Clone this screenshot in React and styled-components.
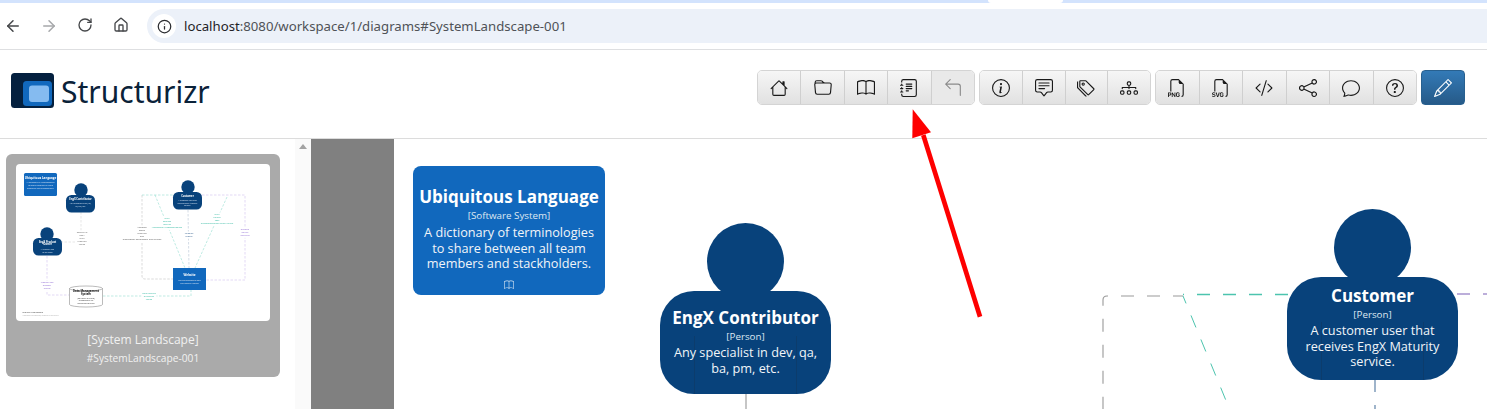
import styled, { createGlobalStyle } from "styled-components";
import { ArrowLeft, ArrowRight, RotateCw, House, Info } from "lucide-react";
import {
  BsHouse,
  BsFolder,
  BsBook,
  BsJournalText,
  BsArrow90DegLeft,
  BsInfoCircle,
  BsChatSquareText,
  BsTags,
  BsDiagram3,
  BsFiletypePng,
  BsFiletypeSvg,
  BsCodeSlash,
  BsShare,
  BsChat,
  BsQuestionCircle,
  BsPencil,
} from "react-icons/bs";

const GlobalStyle = createGlobalStyle`
  html, body {
    margin: 0;
    padding: 0;
    background: #fff;
    overflow: hidden;
  }
  body {
    font-family: "Open Sans", "Liberation Sans", sans-serif;
  }
`;

const Page = styled.div`
  width: 1487px;
  height: 409px;
  display: flex;
  flex-direction: column;
  position: relative;
  overflow: hidden;
`;

const TabStrip = styled.div`
  height: 3px;
  flex: none;
  display: flex;
  background: #d3e3fd;
`;

const TabGap = styled.div`
  width: 75px;
  margin-left: 988px;
  border-radius: 0 0 3px 3px;
  background: #fff;
`;

const BrowserBar = styled.div`
  height: 47px;
  flex: none;
  box-sizing: border-box;
  display: flex;
  align-items: center;
  border-bottom: 1px solid #dedfe1;
  background: #fff;
`;

const NavGroup = styled.div`
  display: flex;
  margin-left: -5px;
`;

const NavButton = styled.div`
  width: 36px;
  display: flex;
  justify-content: center;
  color: ${(p) => (p.$off ? "#a6a8ab" : "#45474a")};
`;

const AddressPill = styled.div`
  flex: 1;
  height: 34px;
  margin-left: 8px;
  display: flex;
  align-items: center;
  gap: 8px;
  padding-left: 5px;
  border-radius: 17px 0 0 17px;
  background: #ecf1f9;
  font-family: "Noto Sans", sans-serif;
  font-size: 13.2px;
  color: #1f2226;
`;

const InfoDot = styled.div`
  width: 24px;
  height: 24px;
  border-radius: 50%;
  background: #fff;
  display: flex;
  align-items: center;
  justify-content: center;
  color: #2c2d30;
`;

const UrlRest = styled.span`
  color: #4f5257;
`;

const Header = styled.header`
  height: 89px;
  flex: none;
  box-sizing: border-box;
  display: flex;
  align-items: flex-start;
  justify-content: space-between;
  padding: 20px 22px 0 11px;
  border-bottom: 1px solid #dcdcdc;
`;

const Brand = styled.div`
  display: flex;
  align-items: center;
  gap: 7px;
  height: 35px;
  margin-top: 3px;
  font-family: "Noto Sans", sans-serif;
  font-size: 30px;
  color: #0a2239;
`;

const BrandName = styled.span`
  padding-top: 2px;
`;

const Toolbar = styled.div`
  display: flex;
  gap: 4px;
`;

const ButtonGroup = styled.div`
  width: ${(p) => p.$width}px;
  box-sizing: border-box;
  display: flex;
  border: 1px solid #d4d4d4;
  border-radius: 5px;
  overflow: hidden;
`;

const ToolButton = styled.div`
  flex: 1;
  height: 33px;
  box-sizing: border-box;
  display: flex;
  align-items: center;
  justify-content: center;
  font-size: 18px;
  color: ${(p) => (p.$off ? "#8a8a8a" : "#1a1a1a")};
  background: ${(p) => (p.$off ? "#e9e9e9" : "linear-gradient(#f6f6f6, #e1e1e1)")};
  & + & {
    border-left: 1px solid #cfcfcf;
  }
`;

const EditButton = styled.div`
  width: 44px;
  height: 35px;
  display: flex;
  align-items: center;
  justify-content: center;
  font-size: 18px;
  color: #fff;
  border-radius: 4px;
  border: 1px solid #28608f;
  box-sizing: border-box;
  background: linear-gradient(#337ab7, #265a88);
`;

const Body = styled.div`
  flex: 1;
  display: flex;
  min-height: 0;
`;

const Sidebar = styled.aside`
  width: 311px;
  flex: none;
  display: flex;
  background: #fff;
`;

const ThumbList = styled.div`
  flex: 1;
  padding: 15px 15px 0 6px;
`;

const ThumbCard = styled.div`
  height: 223px;
  box-sizing: border-box;
  padding: 10px;
  border-radius: 6px;
  background: #aaaaaa;
  text-align: center;
  color: #f1f1f1;
`;

const ThumbImage = styled.svg`
  display: block;
  width: 254px;
  height: 157px;
  border-radius: 4px;
  background: #fff;
  filter: blur(0.25px);
`;

const ThumbTitle = styled.div`
  margin-top: 10px;
  font-size: 12px;
  line-height: 18px;
`;

const ThumbKey = styled.div`
  margin-top: 1px;
  font-size: 10.2px;
  line-height: 16px;
`;

const ScrollTrack = styled.div`
  width: 16px;
  background: #fafafa;
  display: flex;
  justify-content: center;
  padding-top: 5px;
  box-sizing: border-box;
`;

const ScrollArrow = styled.div`
  width: 0;
  height: 0;
  border-left: 4px solid transparent;
  border-right: 4px solid transparent;
  border-bottom: 5px solid #a3a3a3;
`;

const Gutter = styled.div`
  width: 83px;
  flex: none;
  background: #808080;
`;

const Canvas = styled.main`
  flex: 1;
  position: relative;
  overflow: hidden;
  background: #fff;
`;

const Lines = styled.svg`
  position: absolute;
  left: 0;
  top: 0;
  width: 1093px;
  height: 270px;
`;

const NodeName = styled.div`
  font-size: 17px;
  line-height: 24px;
  font-weight: 700;
`;

const NodeType = styled.div`
  font-size: 9.8px;
  line-height: 13px;
  color: #dfe8f2;
`;

const NodeText = styled.div`
  position: relative;
  margin-top: 3px;
  font-size: 12.7px;
  line-height: 15.5px;
  color: #f1f5f9;
`;

const NodeIcon = styled.div`
  display: flex;
  justify-content: center;
  margin-top: 8px;
  font-size: 10px;
  color: #d5e3f2;
`;

const SystemBox = styled.div`
  position: absolute;
  left: ${(p) => p.$x}px;
  top: ${(p) => p.$y}px;
  width: 192px;
  height: 129px;
  box-sizing: border-box;
  padding-top: 19px;
  border-radius: 8px;
  background: #1168bd;
  color: #fff;
  text-align: center;
`;

const PersonHead = styled.div`
  position: absolute;
  left: ${(p) => p.$x + 47}px;
  top: ${(p) => p.$y}px;
  width: 77px;
  height: 77px;
  border-radius: 50%;
  background: #08427b;
`;

const PersonBody = styled.div`
  position: absolute;
  left: ${(p) => p.$x}px;
  top: ${(p) => p.$y + 68}px;
  width: 171px;
  height: 103px;
  box-sizing: border-box;
  padding-top: ${(p) => p.$pad}px;
  border-radius: 34px;
  background: #08427b;
  color: #fff;
  text-align: center;
  &::before {
    content: "";
    position: absolute;
    left: 34px;
    right: 34px;
    top: 45px;
    bottom: 0;
    border-left: 1px solid #0c3c6c;
    border-right: 1px solid #0c3c6c;
  }
  ${NodeText} {
    margin-top: 2px;
  }
`;

const ArrowMark = styled.svg`
  position: absolute;
  left: 900px;
  top: 100px;
`;

const toolGroups = [
  {
    width: 218,
    items: [
      { icon: BsHouse },
      { icon: BsFolder },
      { icon: BsBook },
      { icon: BsJournalText },
      { icon: BsArrow90DegLeft, off: true },
    ],
  },
  {
    width: 172,
    items: [{ icon: BsInfoCircle }, { icon: BsChatSquareText }, { icon: BsTags }, { icon: BsDiagram3 }],
  },
  {
    width: 262,
    items: [
      { icon: BsFiletypePng },
      { icon: BsFiletypeSvg },
      { icon: BsCodeSlash },
      { icon: BsShare },
      { icon: BsChat },
      { icon: BsQuestionCircle },
    ],
  },
];

const miniEdges = [
  { d: "M126 31V112Q126 115 129 115H157", c: "#b5b5b5" },
  { d: "M126 31H157", c: "#7fd6c6" },
  { d: "M186 31H229V116H190", c: "#c4b0ea" },
  { d: "M139 31L169 104", c: "#7fd6c6" },
  { d: "M211 33L179 104", c: "#7fd6c6" },
  { d: "M172 46L173 104", c: "#a9b9cc" },
  { d: "M65 48V78H46", c: "#cfcfcf" },
  { d: "M31 92V131H53", c: "#c4b0ea" },
  { d: "M87 132H175V126", c: "#7fd6c6" },
];

const miniLabels = [
  { x: 66, y: 69, w: 12, c: "#666", lines: ["Reports to", "EngX", "Data", "Progress", "Issues"] },
  { x: 126, y: 64, w: 47, c: "#555", lines: ["Manages", "scope", "priorities", "and", "Stakeholder engagement and reviews"] },
  { x: 151, y: 55, w: 30, c: "#30b8a0", lines: ["Data", "services", "metrics", "Assessment recommendation"] },
  { x: 201, y: 51, w: 32, c: "#30b8a0", lines: ["Data", "Update", "Logs", "Recommendation report review"] },
  { x: 173, y: 70, w: 10, c: "#35608f", lines: ["Updates", "project"] },
  { x: 229, y: 66, w: 12, c: "#8a63d2", lines: ["Submits", "and its", "activities"] },
  { x: 31, y: 119, w: 12, c: "#8a63d2", lines: ["Manage and", "Request", "review"] },
  { x: 133, y: 130, w: 15, c: "#30b8a0", lines: ["Data services", "of account", "Issues"] },
];

const miniPeople = [
  { x: 50, y: 31, hx: 65, hy: 26, name: ["EngX Contributor"], text: ["Any specialist in dev, qa,", "ba, pm, etc."] },
  { x: 17, y: 74, hx: 31, hy: 70, name: ["EngX Product", "Owner"], text: ["A Maturity lead", "of the team"] },
  { x: 157, y: 28, hx: 172, hy: 23, name: ["Customer"], text: ["A customer user that", "receives EngX Maturity", "service."] },
];

function MiniText({ x, y, lines, size = 2.3, fill, bold, step = 3.1 })
{
  return lines.map((line, i) => (
    <text key={line + i} x={x} y={y + i * step} fontSize={size} fill={fill} fontWeight={bold ? 700 : 400} textAnchor="middle">
      {line}
    </text>
  ));
}

function MiniDiagram()
{
  return (
    <ThumbImage viewBox="0 0 254 157">
      {miniEdges.map((edge) => (
        <path key={edge.d} d={edge.d} fill="none" stroke={edge.c} strokeWidth="0.5" strokeDasharray="2.5 1.5" />
      ))}

      {miniLabels.map((label) => (
        <g key={label.x + "-" + label.y}>
          <rect x={label.x - label.w / 2} y={label.y - 2.5} width={label.w} height={label.lines.length * 3.1 + 1} fill="#fff" />
          <MiniText x={label.x} y={label.y} lines={label.lines} fill={label.c} size={2.2} />
        </g>
      ))}

      <rect x="8" y="9" width="33" height="23" rx="1.5" fill="#1168bd" />
      <MiniText x={24.5} y={14.5} lines={["Ubiquitous Language"]} fill="#fff" size={3} bold />
      <MiniText x={24.5} y={19} lines={["A dictionary of terminologies", "to share between all team", "members and stackholders."]} fill="#dbe8f6" size={2.1} step={2.9} />

      {miniPeople.map((person) => (
        <g key={person.name[0]}>
          <circle cx={person.hx} cy={person.hy} r="6.7" fill="#08427b" />
          <rect x={person.x} y={person.y} width="29" height="17.5" rx="5.5" fill="#08427b" />
          <MiniText x={person.x + 14.5} y={person.y + 4.5} lines={person.name} fill="#fff" size={2.6} bold step={2.9} />
          <MiniText x={person.x + 14.5} y={person.y + 6.5 + person.name.length * 2.9} lines={person.text} fill="#d5e3f2" size={1.9} step={2.4} />
        </g>
      ))}

      <rect x="157" y="104" width="33" height="22" fill="#1168bd" />
      <MiniText x={173.5} y={112} lines={["Website"]} fill="#fff" size={3} bold />
      <MiniText x={173.5} y={117} lines={["Includes assessment flow", "and maturity reports"]} fill="#d5e3f2" size={1.9} step={2.6} />

      <path d="M53.5 124.5V140.5A16.5 2.5 0 0 0 86.5 140.5V124.5A16.5 2.5 0 0 0 53.5 124.5A16.5 2.5 0 0 0 86.5 124.5" fill="#fff" stroke="#777" strokeWidth="0.5" />
      <MiniText x={70} y={128} lines={["Data Management", "System"]} fill="#111" size={2.8} bold />
      <MiniText x={70} y={134.5} lines={["[Software System]", "responsible for", "collecting metrics"]} fill="#333" size={2.1} step={2.7} />

      <text x="6.5" y="149" fontSize="2.4" fill="#444">System Landscape</text>
      <text x="6.5" y="152" fontSize="1.6" fill="#aaa">Workspace last modified, rendered by Structurizr</text>
    </ThumbImage>
  );
}

function Logo()
{
  return (
    <svg width="43" height="35" viewBox="0 0 43 35">
      <rect width="43" height="35" rx="3.5" fill="#04203f" />
      <rect x="12" y="8" width="29" height="25" rx="3.5" fill="#1168bd" />
      <rect x="18" y="12.5" width="20" height="16.5" rx="3" fill="#85bbf0" />
    </svg>
  );
}

export default function App()
{
  return (
    <Page>
      <GlobalStyle />
      <TabStrip><TabGap /></TabStrip>
      <BrowserBar>
        <NavGroup>
          <NavButton><ArrowLeft size={18} strokeWidth={2} /></NavButton>
          <NavButton $off><ArrowRight size={18} strokeWidth={2} /></NavButton>
          <NavButton><RotateCw size={16} strokeWidth={2} /></NavButton>
          <NavButton><House size={16} strokeWidth={2} /></NavButton>
        </NavGroup>
        <AddressPill>
          <InfoDot><Info size={15} strokeWidth={2} /></InfoDot>
          <span>localhost<UrlRest>:8080/workspace/1/diagrams#SystemLandscape-001</UrlRest></span>
        </AddressPill>
      </BrowserBar>

      <Header>
        <Brand><Logo /><BrandName>Structurizr</BrandName></Brand>
        <Toolbar>
          {toolGroups.map((group) => (
            <ButtonGroup key={group.width} $width={group.width}>
              {group.items.map(({ icon: Icon, off }, j) => (
                <ToolButton key={j} $off={off}><Icon /></ToolButton>
              ))}
            </ButtonGroup>
          ))}
          <EditButton><BsPencil /></EditButton>
        </Toolbar>
      </Header>

      <Body>
        <Sidebar>
          <ThumbList>
            <ThumbCard>
              <MiniDiagram />
              <ThumbTitle>[System Landscape]</ThumbTitle>
              <ThumbKey>#SystemLandscape-001</ThumbKey>
            </ThumbCard>
          </ThumbList>
          <ScrollTrack><ScrollArrow /></ScrollTrack>
        </Sidebar>
        <Gutter />
        <Canvas>
          <Lines viewBox="394 139 1093 270">
            <line x1="746" y1="394" x2="746" y2="409" stroke="#b3b3b3" strokeWidth="1.5" />
            <path d="M1183 296H1107Q1103 296 1103 300V409" fill="none" stroke="#999" strokeWidth="1.1" strokeDasharray="13 13" strokeDashoffset="3" />
            <path d="M1288 294.5H1183" fill="none" stroke="#4cc4ae" strokeWidth="1.4" strokeDasharray="13 13" />
            <path d="M1183 296L1234 420" fill="none" stroke="#4cc4ae" strokeWidth="1" strokeDasharray="13 13" strokeDashoffset="5" />
            <path d="M1457 294H1487" fill="none" stroke="#7b5fb5" strokeWidth="1.2" strokeDasharray="13 13" />
            <path d="M1375 380V409" fill="none" stroke="#5f83a8" strokeWidth="1.2" strokeDasharray="12 13" />
          </Lines>

          <SystemBox $x={19} $y={27}>
            <NodeName>Ubiquitous Language</NodeName>
            <NodeType>[Software System]</NodeType>
            <NodeText>A dictionary of terminologies<br />to share between all team<br />members and stackholders.</NodeText>
            <NodeIcon><BsBook /></NodeIcon>
          </SystemBox>

          <PersonHead $x={266} $y={84} />
          <PersonBody $x={266} $y={84} $pad={15}>
            <NodeName>EngX Contributor</NodeName>
            <NodeType>[Person]</NodeType>
            <NodeText>Any specialist in dev, qa,<br />ba, pm, etc.</NodeText>
          </PersonBody>

          <PersonHead $x={893} $y={70} />
          <PersonBody $x={893} $y={70} $pad={7}>
            <NodeName>Customer</NodeName>
            <NodeType>[Person]</NodeType>
            <NodeText>A customer user that<br />receives EngX Maturity<br />service.</NodeText>
          </PersonBody>
        </Canvas>
      </Body>

      <ArrowMark width="100" height="230" viewBox="0 0 100 230">
        <path d="M80 216.7L23.3 35" stroke="#fe0000" strokeWidth="4.7" fill="none" />
        <path d="M12.7 9.3L31 32.3L12.3 38.3Z" fill="#fe0000" />
      </ArrowMark>
    </Page>
  );
}
